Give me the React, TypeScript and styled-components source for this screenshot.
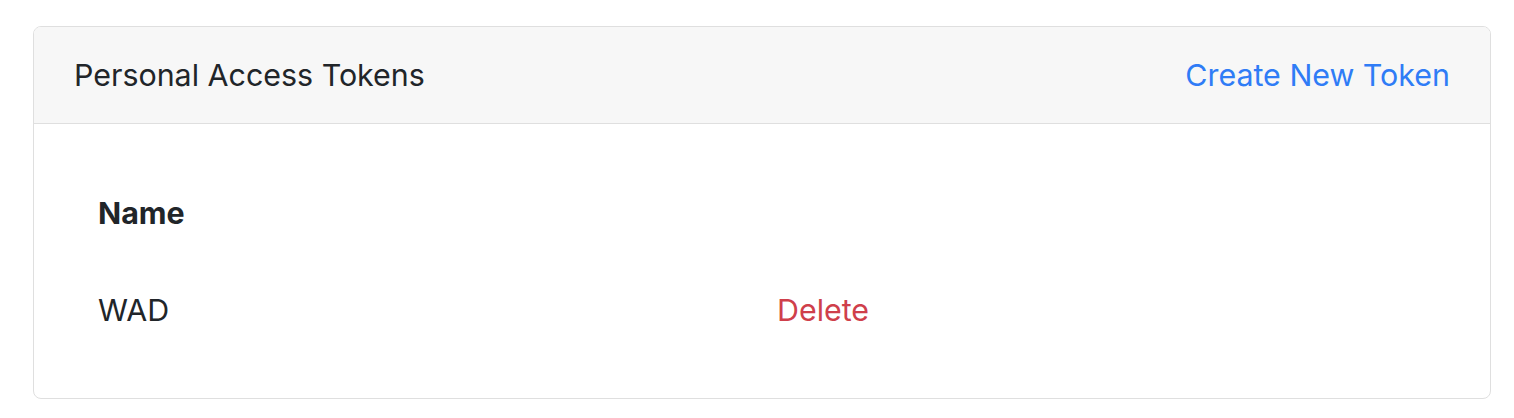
import React from "react";
import styled, { createGlobalStyle } from "styled-components";

const GlobalStyle = createGlobalStyle`
  html, body {
    margin: 0;
    padding: 0;
    background: #ffffff;
  }
  body {
    font-family: Inter, "Noto Sans", sans-serif;
    color: #212529;
    -webkit-font-smoothing: antialiased;
  }
`;

const Page = styled.div`
  padding: 26px 23px 20px 33px;
`;

const Card = styled.section`
  display: flex;
  flex-direction: column;
  border: 1px solid #dfdfdf;
  border-radius: 8px;
  background: #ffffff;
  overflow: hidden;
`;

const CardHeader = styled.header`
  display: flex;
  align-items: center;
  justify-content: space-between;
  padding: 24px 40px;
  background: #f7f7f7;
  border-bottom: 1px solid #dfdfdf;
  font-size: 30.4px;
  line-height: 48px;
`;

const Title = styled.span`
  color: #212529;
`;

const HeaderLink = styled.a`
  color: #2f7cf6;
  text-decoration: none;
  cursor: pointer;
`;

const CardBody = styled.div`
  padding: 40px;
`;

const Table = styled.table`
  width: 100%;
  border-collapse: collapse;
  font-size: 30.4px;
  line-height: 48px;
`;

const HeadCell = styled.th<{ $width?: string }>`
  box-sizing: border-box;
  text-align: left;
  font-weight: 700;
  padding: 24px;
  border-top: 1px solid transparent;
  width: ${(p) => p.$width || "auto"};
`;

const Cell = styled.td`
  padding: 24px;
  border-top: 1px solid transparent;
`;

const DeleteLink = styled.a`
  color: #cf3f4b;
  text-decoration: none;
  cursor: pointer;
`;

const tokens = [{ id: 1, name: "WAD" }];

export default function App() {
  return (
    <>
      <GlobalStyle />
      <Page>
        <Card>
          <CardHeader>
            <Title>Personal Access Tokens</Title>
            <HeaderLink>Create New Token</HeaderLink>
          </CardHeader>
          <CardBody>
            <Table>
              <thead>
                <tr>
                  <HeadCell $width="679px">Name</HeadCell>
                  <HeadCell />
                </tr>
              </thead>
              <tbody>
                {tokens.map((t) => (
                  <tr key={t.id}>
                    <Cell>{t.name}</Cell>
                    <Cell>
                      <DeleteLink>Delete</DeleteLink>
                    </Cell>
                  </tr>
                ))}
              </tbody>
            </Table>
          </CardBody>
        </Card>
      </Page>
    </>
  );
}
